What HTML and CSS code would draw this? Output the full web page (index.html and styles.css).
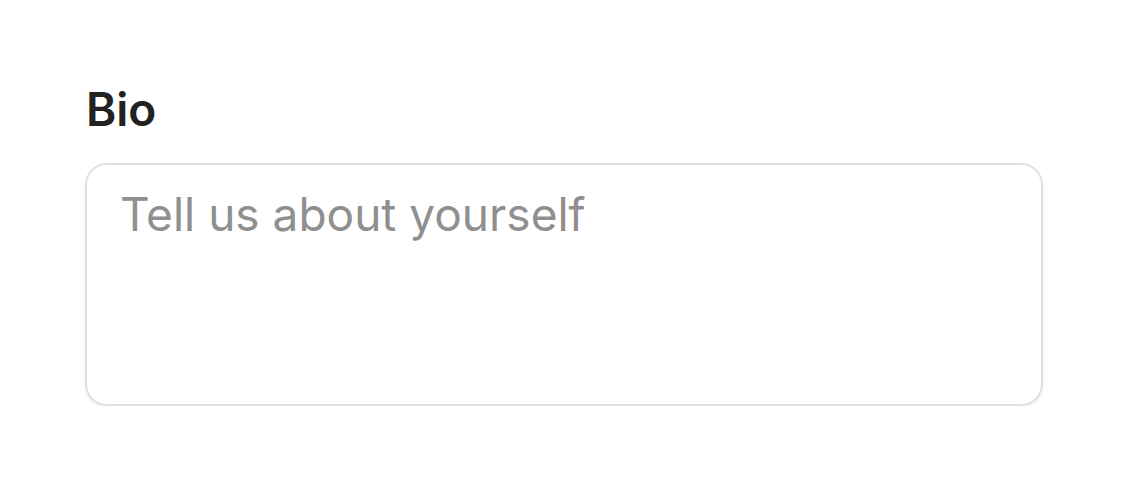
FILE: index.html
```html
<!DOCTYPE html>
<html>
<head>
<meta charset="utf-8">
<link rel="stylesheet" href="styles.css">
</head>
<body>
<div class="field">
  <label class="label" for="bio">Bio</label>
  <textarea id="bio" class="textarea" placeholder="Tell us about yourself"></textarea>
</div>
</body>
</html>
```
FILE: styles.css
```css
html, body {
  margin: 0;
  padding: 0;
  background: #ffffff;
}
body {
  font-family: Inter, "Liberation Sans", Arial, sans-serif;
}
.field {
  display: flex;
  flex-direction: column;
  padding: 80px 0 0 85px;
  width: 958px;
}
.label {
  font-size: 46px;
  font-weight: 600;
  line-height: 58px;
  color: #222222;
  margin-left: 1px;
  margin-bottom: 25px;
}
.textarea {
  box-sizing: border-box;
  width: 958px;
  height: 243px;
  margin: 0;
  padding: 22px 33px;
  border: 2px solid #e0e0e0;
  border-radius: 22px;
  box-shadow: 0 2px 3px rgba(0, 0, 0, 0.06);
  font-family: Inter, "Liberation Sans", Arial, sans-serif;
  font-size: 46px;
  line-height: 1.2;
  color: #222222;
  resize: none;
  outline: none;
  background: #ffffff;
}
.textarea::placeholder {
  color: #8f8f8f;
  opacity: 1;
}
```
